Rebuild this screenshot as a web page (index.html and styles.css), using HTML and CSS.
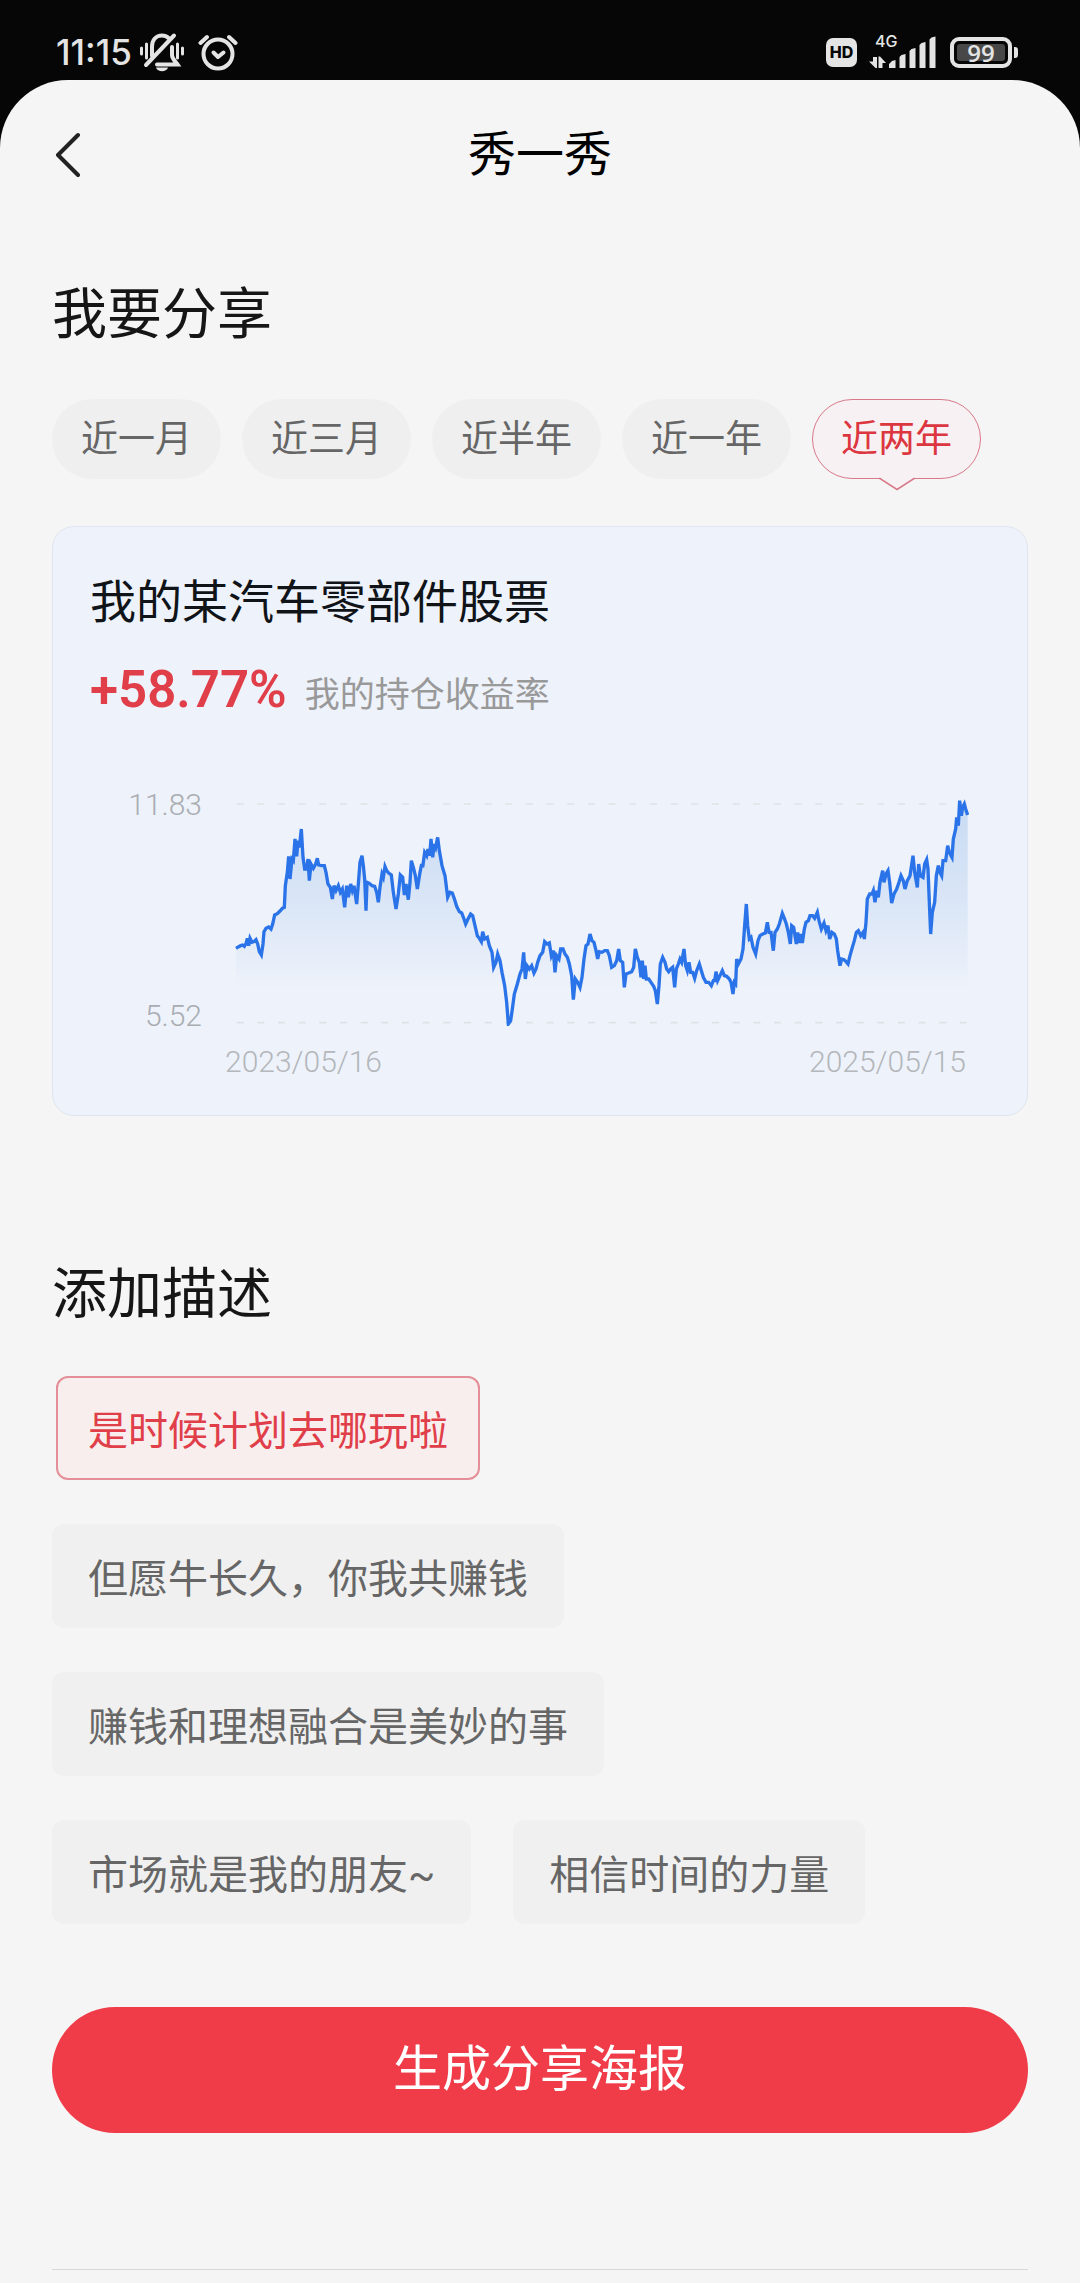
FILE: index.html
```html
<!DOCTYPE html>
<html lang="zh-CN">
<head>
  <meta charset="UTF-8">
  <meta name="viewport" content="width=device-width, initial-scale=1.0">
  <title>秀一秀</title>
  <link rel="stylesheet" href="styles.css">
</head>
<body>
  <!-- Status bar -->
  <div class="status-bar">
    <div class="status-group">
      <span class="status-time">11:15</span>
      <svg class="icon-mute" viewBox="0 0 44 40" width="44" height="40" fill="none" stroke="#e4e4e4" stroke-linecap="round">
        <path d="M1.500 16v6M6.500 12v14M37.500 12v14M42.500 16v6" stroke-width="3"/>
        <path d="M12 24V15c0-7 4-11.500 10-11.500 2.500 0 5 1 6.500 2.500" stroke-width="4"/>
        <path d="M32 15v8c0 4 3 6 5.500 9.500H17" stroke-width="4"/>
        <path d="M6 33L34 3.500" stroke-width="4"/>
        <path d="M16 35.500h12c-1.500 5-10.500 5-12 0z" fill="#e4e4e4" stroke="none"/>
      </svg>
      <svg class="icon-alarm" viewBox="0 0 40 40" width="40" height="40" fill="none" stroke="#e4e4e4" stroke-linecap="round" stroke-linejoin="round">
        <circle cx="20" cy="22" r="14.500" stroke-width="4"/>
        <path d="M2.500 11l6.500-6M31 5l6.500 6" stroke-width="4"/>
        <path d="M15.500 20.500l4.500 4.500 5.500-4.500" stroke-width="4"/>
      </svg>
    </div>
    <div class="status-group">
      <span class="hd-badge">HD</span>
      <span class="signal">
        <span class="signal-type">4G</span>
        <svg viewBox="0 0 70 34" width="70" height="34" fill="#e4e4e4">
          <path d="M4 22h4v11H6.500L0 26.500h4zM9.500 33V21.500H11l6 6.500h-3.500v5z"/>
          <path d="M20 33v-4l3-3 3.500-1V33zM30.500 33V22l2-2 4-1V33zM40.500 33V16l2-2 4-1V33zM50.500 33V10l2-2 4-1V33zM60.500 33V4.500l2-2 4-1V33z"/>
        </svg>
      </span>
      <span class="battery"><span class="battery-level">99</span></span>
    </div>
  </div>

  <main class="page">
    <header class="page-header">
      <button class="back" type="button" aria-label="返回">
        <svg viewBox="0 0 28 46" width="28" height="46" fill="none" stroke="#222" stroke-width="4" stroke-linecap="round" stroke-linejoin="round">
          <path d="M26 3L6 23l20 20"/>
        </svg>
      </button>
      <h1>秀一秀</h1>
    </header>

    <!-- Period tabs and chart -->
    <section class="share">
      <h2>我要分享</h2>
      <div class="periods">
        <button class="period" type="button">近一月</button>
        <button class="period" type="button">近三月</button>
        <button class="period" type="button">近半年</button>
        <button class="period" type="button">近一年</button>
        <button class="period active" type="button">近两年
          <svg class="pointer" viewBox="0 0 36 14" width="36" height="14">
            <path d="M1 0v1L18 12.500 35 1V0z" fill="#f8f1f3"/>
            <path d="M0 1.500h1L18 12.500 35 1.500h1" fill="none" stroke="#d8798a" stroke-width="1.500"/>
          </svg>
        </button>
      </div>

      <div class="card">
        <h3>我的某汽车零部件股票</h3>
        <p class="profit"><strong>+58.77%</strong><span>我的持仓收益率</span></p>
        <div class="chart">
          <div class="y-axis"><span>11.83</span><span>5.52</span></div>
          <svg class="plot" viewBox="105 87 2202 684">
            <defs>
              <linearGradient id="fade" gradientUnits="userSpaceOnUse" x1="0" y1="95" x2="0" y2="660">
                <stop offset="0" stop-color="#2b7bd8" stop-opacity="0.200"/>
                <stop offset="0.600" stop-color="#2b7bd8" stop-opacity="0.090"/>
                <stop offset="1" stop-color="#2b7bd8" stop-opacity="0"/>
              </linearGradient>
            </defs>
            <path class="grid-line" d="M110 105H2300M110 761H2300"/>
            <polygon id="area" fill="url(#fade)"/>
            <polyline id="line" class="price-line"/>
          </svg>
          <div class="x-axis"><span>2023/05/16</span><span>2025/05/15</span></div>
        </div>
      </div>
    </section>

    <!-- Captions -->
    <section class="describe">
      <h2>添加描述</h2>
      <div class="captions">
        <div class="caption-row"><button class="caption active" type="button">是时候计划去哪玩啦</button></div>
        <div class="caption-row"><button class="caption" type="button">但愿牛长久，你我共赚钱</button></div>
        <div class="caption-row"><button class="caption" type="button">赚钱和理想融合是美妙的事</button></div>
        <div class="caption-row">
          <button class="caption" type="button">市场就是我的朋友~</button>
          <button class="caption" type="button">相信时间的力量</button>
        </div>
      </div>
    </section>

    <button class="submit" type="button">生成分享海报</button>
    <hr>
  </main>
  <script src="chart.js"></script>
</body>
</html>
```

FILE: styles.css
```css
:root {
  --brand-red: #f03c48;
  --text: #161616;
  --muted: #666;
  --page-bg: #f5f5f5;
  --side: 52px;
}

* {
  box-sizing: border-box;
}

body {
  display: flex;
  flex-direction: column;
  min-height: 100vh;
  margin: 0;
  background: #060606;
  color: var(--text);
  font-family: "Noto Sans CJK SC", sans-serif;
}

h1, h2, h3, p {
  margin: 0;
  font-weight: 400;
}

button {
  border: 0;
  padding: 0;
  font-family: inherit;
  cursor: pointer;
}

svg {
  display: block;
}

/* Status bar */
.status-bar {
  display: flex;
  justify-content: space-between;
  height: 80px;
  padding: 24px 68px 0 56px;
  color: #e4e4e4;
  font-family: Inter, sans-serif;
}

.status-group {
  display: flex;
  align-items: center;
  height: 56px;
}

.status-time {
  font-size: 35px;
  font-weight: 500;
}

.icon-mute {
  margin-left: 8px;
}

.icon-alarm {
  margin-left: 14px;
}

.hd-badge {
  width: 31px;
  height: 29px;
  border-radius: 7px;
  background: #e4e4e4;
  color: #060606;
  font-size: 16px;
  font-weight: 800;
  line-height: 29px;
  text-align: center;
}

.signal {
  position: relative;
  margin-left: 12px;
}

.signal-type {
  position: absolute;
  top: -2px;
  left: 6px;
  font-size: 16px;
  font-weight: 500;
  line-height: 16px;
}

.battery {
  position: relative;
  width: 62px;
  height: 31px;
  margin-left: 11px;
  padding: 3px;
  border: 4px solid #e4e4e4;
  border-radius: 9px;
}

.battery::after {
  content: "";
  position: absolute;
  top: 6px;
  right: -10px;
  width: 4px;
  height: 11px;
  border-radius: 0 3px 3px 0;
  background: #e4e4e4;
}

.battery-level {
  display: block;
  border-radius: 3px;
  background: #484848;
  font-family: "Open Sans", sans-serif;
  font-size: 24px;
  font-weight: 600;
  line-height: 17px;
  text-align: center;
}

/* Page */
.page {
  flex: 1;
  padding: 0 var(--side) 12px;
  border-radius: 68px 68px 0 0;
  background: var(--page-bg);
}

.page-header {
  display: grid;
  grid-template-columns: 1fr auto 1fr;
  align-items: center;
  height: 150px;
}

.page-header h1 {
  padding-bottom: 10px;
  color: #000;
  font-size: 48px;
  line-height: 64px;
}

.back {
  justify-self: start;
  background: none;
}

h2 {
  font-size: 55px;
  line-height: 64px;
}

.share {
  padding-top: 47px;
}

.periods {
  display: flex;
  gap: 21px;
  margin-top: 58px;
}

.period {
  position: relative;
  height: 80px;
  padding: 0 28px 6px;
  border: 1px solid transparent;
  border-radius: 40px;
  background: #efefef;
  background-clip: border-box;
  color: var(--muted);
  font-size: 37px;
  line-height: 56px;
  white-space: nowrap;
}

.period.active {
  border-color: #d8798a;
  background: #f8f1f3;
  color: #dc3640;
}

.pointer {
  position: absolute;
  top: 77px;
  left: 50%;
  margin-left: -18px;
}

/* Chart card */
.card {
  margin-top: 47px;
  padding: 41px 58px 35px 37px;
  border: 1px solid #dfe5f0;
  border-radius: 22px;
  background: #eef2fa;
}

.card h3 {
  color: #101418;
  font-size: 46px;
  line-height: 60px;
}

.profit {
  display: flex;
  align-items: baseline;
  gap: 18px;
  margin-top: 32px;
  color: #999;
  font-size: 35px;
  line-height: 60px;
}

.profit strong {
  color: #e03e49;
  font-family: Roboto, sans-serif;
  font-size: 51px;
  font-weight: 600;
}

.chart {
  display: grid;
  grid-template-columns: 112px 1fr;
  column-gap: 33px;
  margin-top: 76px;
  color: #b4b7bb;
  font-family: Roboto, sans-serif;
  font-size: 30px;
  font-weight: 300;
}

.y-axis {
  display: flex;
  flex-direction: column;
  justify-content: space-between;
  margin: -7px 0 -4px;
  color: #a9adb2;
  line-height: 28px;
  text-align: right;
}

.plot {
  width: 100%;
}

.grid-line {
  stroke: #dfe2e5;
  stroke-width: 5;
  stroke-dasharray: 21 41;
}

.price-line {
  fill: none;
  stroke: #2a73e8;
  stroke-width: 10;
}

.x-axis {
  display: flex;
  grid-column: 2;
  justify-content: space-between;
  margin: 18px 3px 0 -10px;
  line-height: 36px;
}

/* Captions */
.describe {
  padding-top: 141px;
}

.captions {
  display: flex;
  flex-direction: column;
  gap: 44px;
  margin-top: 55px;
}

.caption-row {
  display: flex;
  flex-wrap: wrap;
  gap: 42px;
}

.caption {
  height: 104px;
  padding: 8px 36px 0;
  border-radius: 12px;
  background: #f0f0f0;
  color: var(--muted);
  font-family: Roboto, "Noto Sans CJK SC", sans-serif;
  font-size: 40px;
  line-height: 56px;
}

.caption.active {
  margin: 0 4px;
  padding: 8px 30px 0;
  border: 2px solid #e48f97;
  background: #f8eeee;
  color: #e03e49;
}

.submit {
  display: block;
  width: 100%;
  height: 126px;
  margin-top: 83px;
  padding-bottom: 10px;
  border-radius: 63px;
  background: var(--brand-red);
  color: #fff;
  font-size: 49px;
  line-height: 64px;
}

hr {
  height: 1px;
  margin: 136px 0 0;
  border: 0;
  background: #d8d8d8;
}
```

FILE: chart.js
```js
// Price series, in the units of the plot's viewBox
const points = `
108,538 116,533 122,530 128,528 133,532 138,524 142,508 146,530 150,508 156,520 162,518 168,512 173,525 178,548 184,558 189,525
192,488 198,478 206,474 213,480 218,465 224,438 232,434 240,426 247,418 253,415 256,350 262,310 266,262 270,330 276,270 280,275
285,210 290,262 294,215 298,235 304,180 309,265 314,300 320,300 324,270 328,335 333,285 340,298 347,285 352,268 356,288 364,290
373,290 378,310 384,345 391,355 397,390 402,350 408,365 415,350 421,370 427,360 434,415 440,350 445,385 452,345 457,365 462,350
470,405 475,345 480,280 486,260 490,290 494,330 498,425 501,340 508,343 516,350 524,352 530,370 535,400 540,355 546,315 550,325
555,293 560,305 566,312 574,318 580,370 588,420 595,375 601,318 608,325 613,378 618,345 625,392 630,340 634,275 640,295 646,320
652,360 660,310 665,285 668,295 674,250 680,260 684,240 689,260 693,210 698,265 703,225 707,235 713,205 718,245 726,290 735,320
743,385 750,370 757,372 764,392 770,412 778,428 785,432 792,450 797,465 804,450 812,435 818,440 825,470 832,500 838,508 844,518
848,488 854,510 862,505 868,530 876,550 881,595 888,580 893,555 900,575 906,610 914,650 920,700 925,765 932,755 937,720 943,675
952,645 960,615 966,600 971,550 976,630 981,590 988,600 995,590 1002,612 1008,600 1013,580 1020,560 1028,550 1034,518 1041,525
1048,522 1054,560 1060,545 1065,610 1070,560 1077,570 1082,540 1089,540 1095,555 1102,565 1108,585 1115,620 1120,692 1126,630
1133,640 1140,655 1146,625 1152,570 1158,530 1164,525 1170,495 1176,515 1182,520 1188,545 1193,570 1198,548 1206,550 1214,545
1222,545 1228,560 1235,595 1243,590 1250,575 1256,540 1261,575 1268,580 1273,655 1278,615 1286,612 1295,608 1301,595 1306,540
1312,565 1318,580 1323,625 1327,575 1331,630 1335,590 1339,630 1346,630 1353,640 1361,652 1366,665 1372,705 1377,650 1381,585
1388,565 1395,580 1400,600 1406,608 1412,600 1418,595 1424,655 1429,600 1435,585 1440,570 1445,580 1452,540 1457,590 1462,605
1467,580 1472,610 1478,610 1484,628 1490,605 1498,585 1504,605 1510,625 1518,640 1526,640 1534,650 1540,635 1544,635 1548,608
1553,635 1560,620 1567,605 1573,620 1580,622 1588,630 1593,640 1599,675 1603,640 1607,645 1610,570 1615,585 1623,570 1629,540
1634,470 1639,405 1643,470 1648,510 1653,505 1659,535 1667,555 1674,515 1680,500 1688,495 1696,492 1702,460 1707,490 1713,490
1720,545 1725,490 1732,480 1738,465 1747,433 1753,448 1759,465 1765,490 1771,525 1775,470 1781,475 1785,500 1789,525 1793,490
1797,522 1801,495 1807,522 1813,480 1818,460 1825,455 1830,440 1838,440 1844,448 1852,430 1857,455 1864,480 1872,462 1878,485
1884,470 1889,510 1896,490 1903,495 1909,510 1913,545 1920,590 1925,570 1932,572 1938,578 1944,585 1950,560 1957,535 1963,515
1969,490 1975,485 1982,500 1989,490 1993,510 1998,460 2002,390 2009,375 2016,375 2020,365 2025,400 2030,365 2035,385 2040,340
2048,305 2052,340 2058,315 2064,305 2069,340 2075,402 2082,375 2090,360 2097,340 2103,320 2110,335 2115,360 2122,335 2130,320
2139,260 2144,310 2152,355 2156,285 2161,320 2169,325 2174,285 2180,272 2184,300 2188,400 2192,495 2197,430 2204,400 2209,320
2215,290 2220,310 2225,320 2229,275 2237,275 2243,230 2248,250 2256,265 2260,210 2267,180 2270,145 2275,170 2279,95 2284,140
2288,115 2293,105 2297,120 2303,138`.trim();

document.getElementById('line').setAttribute('points', points);
document.getElementById('area').setAttribute('points', `108,761 ${points} 2303,761`);
```
